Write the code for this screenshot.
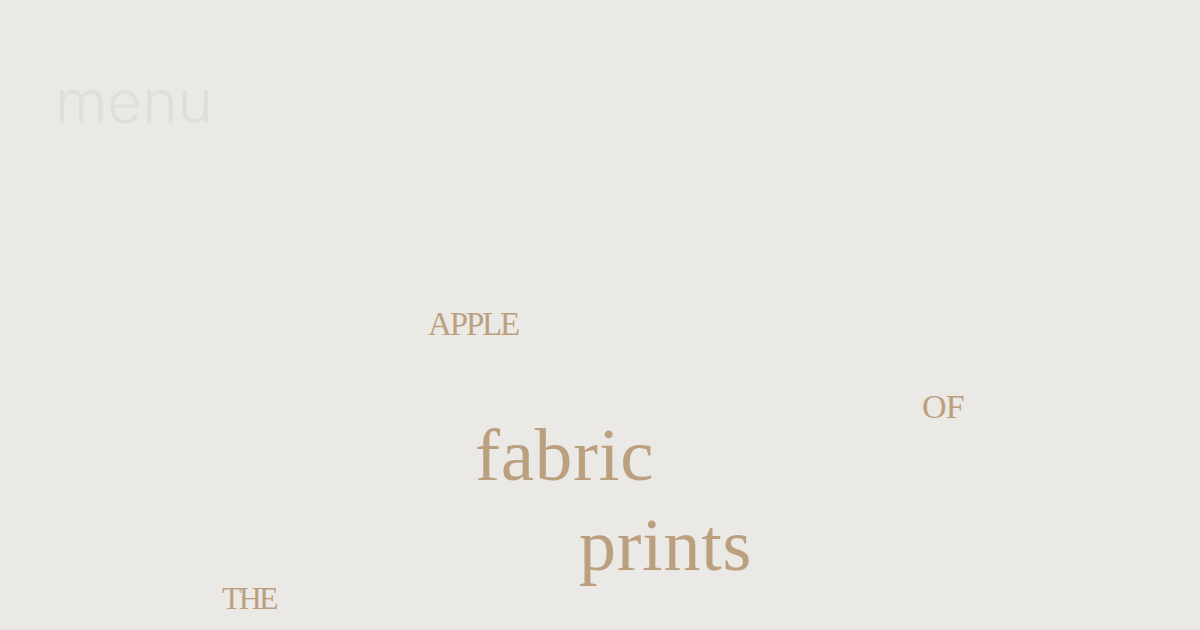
import React from "react";

const words = [
  { text: "APPLE", cls: "left-[428px] top-[308px] text-[33px] tracking-[-0.065em]" },
  { text: "OF", cls: "left-[922px] top-[390px] text-[34px] tracking-[-0.02em]" },
  { text: "fabric", cls: "left-[475px] top-[417px] text-[75px] tracking-[0.01em]" },
  { text: "prints", cls: "left-[579px] top-[508px] text-[74px] tracking-[0.01em]" },
  { text: "THE", cls: "left-[222px] top-[582px] text-[32px] tracking-[-0.09em]" },
];

export default function App() {
  return (
    <div className="relative w-[1200px] h-[630px] overflow-hidden bg-[#ebe9e5]">
      <header className="px-[55px] pt-[71px]">
        <button className="font-['Inter',sans-serif] font-light text-[60px] leading-none text-[#e0deda]">
          menu
        </button>
      </header>

      {/* scattered title words */}
      {words.map((w) => (
        <span
          key={w.text}
          className={`absolute leading-none font-['Liberation_Serif',serif] text-[#bba080] ${w.cls}`}
        >
          {w.text}
        </span>
      ))}
    </div>
  );
}
